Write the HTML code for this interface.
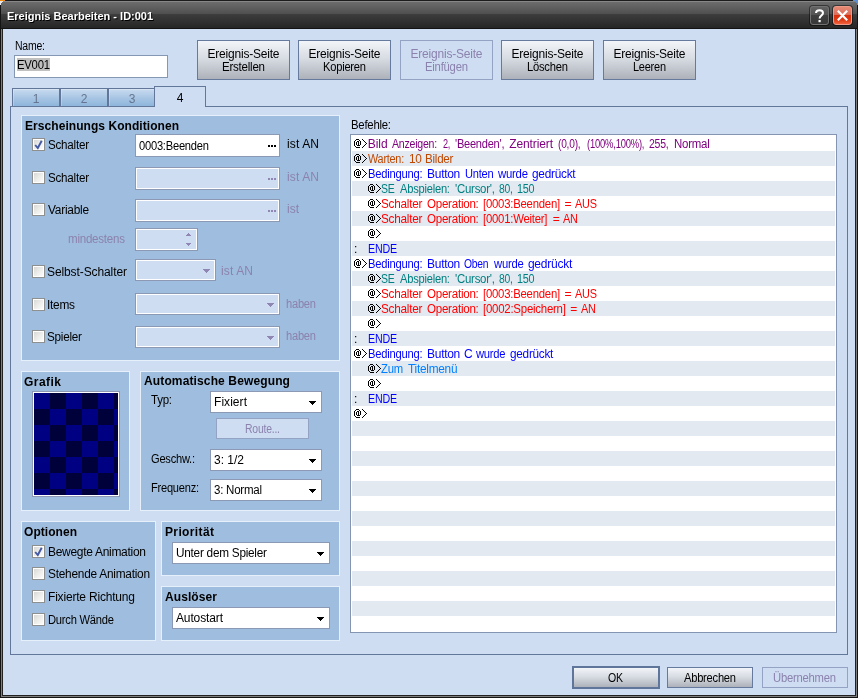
<!DOCTYPE html>
<html><head><meta charset="utf-8"><title>Ereignis Bearbeiten</title>
<style>
*{margin:0;padding:0;box-sizing:border-box}
html,body{width:858px;height:698px;overflow:hidden;background:#1c1c1c}
body{position:relative;font-family:"Liberation Sans",sans-serif;font-size:12px;color:#000;line-height:15px}
.a{position:absolute}
.t{position:absolute;white-space:pre;line-height:15px;height:15px}
#tx{position:absolute;left:0;top:0;width:858px;height:698px;will-change:transform}
.b{font-weight:bold}
.d{color:#8b82ad}
.grp{position:absolute;background:#9fbedf;border:1px solid #e6f0fb}
.in{position:absolute;background:#fff;border:1px solid #8c99b5}
.in.dis{background:#cfddf3;box-shadow:inset 0 0 0 1px #fff}
.cb{position:absolute;width:13px;height:13px;border:1px solid #8e8f8f;background:linear-gradient(135deg,#d4d4d2 0%,#ececea 50%,#ffffff 100%);box-shadow:inset 0 0 0 1px #fff}
.btn{position:absolute;border:1px solid #667a9d;background:linear-gradient(#f2f5f9 0%,#d8dce3 45%,#adb2ba 100%)}
.btn.dis{background:#cfddf3;border-color:#94a3c3}
.arr{position:absolute;width:0;height:0;border-left:3.5px solid transparent;border-right:3.5px solid transparent;border-top:4px solid #000}
.arr.dis{border-top-color:#8f86b3}
.tab{position:absolute;top:88px;height:19px;border:1px solid #617699;background:linear-gradient(#c9dbf0 0%,#a9c6e4 50%,#8db5db 100%);box-shadow:inset 1px 1px 0 rgba(255,255,255,.25)}
.row{position:absolute;left:352px;width:483px;height:15px}
.row.g{background:#e2e9f1}
</style></head>
<body>
<div class="a" style="left:0;top:0;width:858px;height:698px;background:#141414"></div>
<div class="a" style="left:1px;top:1px;width:856px;height:696px;background:#7e7e7e"></div>
<div class="a" style="left:2px;top:2px;width:854px;height:694px;background:#222"></div>
<div class="a" style="left:1px;top:0;width:856px;height:29px;background:linear-gradient(#1c1c1c 0,#1c1c1c 1px,#878787 1px,#878787 2px,#6c6c6c 2px,#505050 13.5px,#3d3d3d 14px,#272727 27.5px,#131313 28px,#131313 29px)"></div>
<div class="a" style="left:810px;top:6px;width:19px;height:19px;border-radius:3px;border:1px solid #727272;box-shadow:0 0 0 1px rgba(0,0,0,.45);background:linear-gradient(#626262 0,#535353 45%,#3e3e3e 50%,#383838 100%)"></div>
<svg class="a" style="left:810px;top:6px" width="19" height="19" viewBox="0 0 19 19"><path d="M6 7 C6 3.2 13 3.2 13 7 C13 9.6 9.6 9.6 9.6 12.6" fill="none" stroke="#fff" stroke-width="2"/><rect x="8.5" y="14" width="2.2" height="2.2" fill="#fff"/></svg>
<div class="a" style="left:833px;top:6px;width:19px;height:19px;border-radius:3px;border:1px solid #ee9a88;box-shadow:0 0 0 1px rgba(0,0,0,.45);background:linear-gradient(#e58a76 0,#dc6f5a 45%,#d8300e 50%,#dc3a16 75%,#f0603c 100%)"></div>
<svg class="a" style="left:833px;top:6px" width="19" height="19" viewBox="0 0 19 19"><path d="M4.8 4.8 L14.2 14.2 M14.2 4.8 L4.8 14.2" fill="none" stroke="#fff" stroke-width="2.2"/></svg>
<div class="a" style="left:0;top:0;width:5px;height:1px;background:#f58a10"></div>
<div class="a" style="left:0;top:1px;width:3px;height:1px;background:#e6e8ea"></div>
<div class="a" style="left:0;top:2px;width:2px;height:1px;background:#e6e8ea"></div>
<div class="a" style="left:0;top:3px;width:1px;height:2px;background:#e6e8ea"></div>
<div class="a" style="left:853px;top:0;width:5px;height:1px;background:#5b8fd6"></div>
<div class="a" style="left:855px;top:1px;width:3px;height:1px;background:#5b8fd6"></div>
<div class="a" style="left:856px;top:2px;width:2px;height:1px;background:#5b8fd6"></div>
<div class="a" style="left:857px;top:3px;width:1px;height:2px;background:#5b8fd6"></div>
<div class="a" style="left:3px;top:29px;width:852px;height:666px;background:#cfddf3"></div>
<div class="in" style="left:14px;top:55px;width:154px;height:23px;border-color:#8497b3"></div>
<div class="a" style="left:17px;top:58px;width:33px;height:13px;background:#c0c0c0"></div>
<div class="btn" style="left:197px;top:40px;width:93px;height:40px"></div>
<div class="btn" style="left:298px;top:40px;width:93px;height:40px"></div>
<div class="btn dis" style="left:400px;top:40px;width:93px;height:40px"></div>
<div class="btn" style="left:501px;top:40px;width:93px;height:40px"></div>
<div class="btn" style="left:603px;top:40px;width:93px;height:40px"></div>
<div class="a" style="left:10px;top:106px;width:838px;height:549px;border:1px solid #63779b;background:#cfddf3"></div>
<div class="tab" style="left:12px;width:48px"></div>
<div class="tab" style="left:60px;width:48px"></div>
<div class="tab" style="left:108px;width:48px"></div>
<div class="a" style="left:154px;top:86px;width:52px;height:21px;border:1px solid #63779b;border-bottom:none;background:#cfddf3"></div>
<div class="grp" style="left:21px;top:115px;width:319px;height:246px"></div>
<div class="cb" style="left:32px;top:138px"></div>
<svg class="a" style="left:32px;top:138px" width="13" height="13" viewBox="0 0 13 13"><path d="M3.2 7 L5.8 10 L9.7 2.8" fill="none" stroke="#4359a5" stroke-width="1.9"/></svg>
<div class="in" style="left:135px;top:134px;width:145px;height:23px"></div>
<div class="a" style="left:268px;top:145px;width:2px;height:2px;background:#000"></div>
<div class="a" style="left:271px;top:145px;width:2px;height:2px;background:#000"></div>
<div class="a" style="left:274px;top:145px;width:2px;height:2px;background:#000"></div>
<div class="cb" style="left:32px;top:171px"></div>
<div class="in dis" style="left:135px;top:167px;width:145px;height:23px"></div>
<div class="a" style="left:268px;top:178px;width:2px;height:2px;background:#8f86b3"></div>
<div class="a" style="left:271px;top:178px;width:2px;height:2px;background:#8f86b3"></div>
<div class="a" style="left:274px;top:178px;width:2px;height:2px;background:#8f86b3"></div>
<div class="cb" style="left:32px;top:203px"></div>
<div class="in dis" style="left:135px;top:199px;width:145px;height:23px"></div>
<div class="a" style="left:268px;top:210px;width:2px;height:2px;background:#8f86b3"></div>
<div class="a" style="left:271px;top:210px;width:2px;height:2px;background:#8f86b3"></div>
<div class="a" style="left:274px;top:210px;width:2px;height:2px;background:#8f86b3"></div>
<div class="in dis" style="left:135px;top:228px;width:63px;height:23px"></div>
<svg class="a" style="left:186px;top:233px" width="5" height="3" viewBox="0 0 5 3" shape-rendering="crispEdges"><path d="M2 0h1v1h-1zM1 1h3v1h-3zM0 2h5v1h-5z" fill="#8f86b3"/></svg>
<svg class="a" style="left:186px;top:243px" width="5" height="3" viewBox="0 0 5 3" shape-rendering="crispEdges"><path d="M0 0h5v1h-5zM1 1h3v1h-3zM2 2h1v1h-1z" fill="#8f86b3"/></svg>
<div class="cb" style="left:32px;top:265px"></div>
<div class="in dis" style="left:135px;top:259px;width:81px;height:22px"></div>
<svg class="a" style="left:203px;top:269px" width="7" height="4" viewBox="0 0 7 4" shape-rendering="crispEdges"><path d="M0 0h7v1h-7zM1 1h5v1h-5zM2 2h3v1h-3zM3 3h1v1h-1z" fill="#8f86b3"/></svg>
<div class="cb" style="left:32px;top:298px"></div>
<div class="in dis" style="left:135px;top:293px;width:145px;height:22px"></div>
<svg class="a" style="left:267px;top:303px" width="7" height="4" viewBox="0 0 7 4" shape-rendering="crispEdges"><path d="M0 0h7v1h-7zM1 1h5v1h-5zM2 2h3v1h-3zM3 3h1v1h-1z" fill="#8f86b3"/></svg>
<div class="cb" style="left:32px;top:330px"></div>
<div class="in dis" style="left:135px;top:326px;width:145px;height:22px"></div>
<svg class="a" style="left:267px;top:336px" width="7" height="4" viewBox="0 0 7 4" shape-rendering="crispEdges"><path d="M0 0h7v1h-7zM1 1h5v1h-5zM2 2h3v1h-3zM3 3h1v1h-1z" fill="#8f86b3"/></svg>
<div class="grp" style="left:21px;top:371px;width:109px;height:140px"></div>
<div class="a" style="left:32px;top:391px;width:88px;height:106px;border:1px solid #8c99b5;background:#fff"></div>
<div class="a" style="left:34px;top:393px;width:84px;height:102px;background-color:#000080;background-image:conic-gradient(#00003a 25%,#000082 0 50%,#00003a 0 75%,#000082 0);background-size:32px 32px;background-position:0 0"></div>
<div class="grp" style="left:140px;top:371px;width:200px;height:140px"></div>
<div class="in" style="left:210px;top:391px;width:112px;height:22px"></div>
<svg class="a" style="left:309px;top:401px" width="7" height="4" viewBox="0 0 7 4" shape-rendering="crispEdges"><path d="M0 0h7v1h-7zM1 1h5v1h-5zM2 2h3v1h-3zM3 3h1v1h-1z" fill="#000"/></svg>
<div class="btn dis" style="left:216px;top:418px;width:93px;height:21px"></div>
<div class="in" style="left:210px;top:449px;width:112px;height:22px"></div>
<svg class="a" style="left:309px;top:459px" width="7" height="4" viewBox="0 0 7 4" shape-rendering="crispEdges"><path d="M0 0h7v1h-7zM1 1h5v1h-5zM2 2h3v1h-3zM3 3h1v1h-1z" fill="#000"/></svg>
<div class="in" style="left:210px;top:479px;width:112px;height:22px"></div>
<svg class="a" style="left:309px;top:489px" width="7" height="4" viewBox="0 0 7 4" shape-rendering="crispEdges"><path d="M0 0h7v1h-7zM1 1h5v1h-5zM2 2h3v1h-3zM3 3h1v1h-1z" fill="#000"/></svg>
<div class="grp" style="left:21px;top:521px;width:135px;height:120px"></div>
<div class="cb" style="left:32px;top:545px"></div>
<svg class="a" style="left:32px;top:545px" width="13" height="13" viewBox="0 0 13 13"><path d="M3.2 7 L5.8 10 L9.7 2.8" fill="none" stroke="#4359a5" stroke-width="1.9"/></svg>
<div class="cb" style="left:32px;top:567px"></div>
<div class="cb" style="left:32px;top:590px"></div>
<div class="cb" style="left:32px;top:613px"></div>
<div class="grp" style="left:161px;top:521px;width:179px;height:55px"></div>
<div class="in" style="left:172px;top:542px;width:158px;height:22px"></div>
<svg class="a" style="left:317px;top:552px" width="7" height="4" viewBox="0 0 7 4" shape-rendering="crispEdges"><path d="M0 0h7v1h-7zM1 1h5v1h-5zM2 2h3v1h-3zM3 3h1v1h-1z" fill="#000"/></svg>
<div class="grp" style="left:161px;top:586px;width:179px;height:55px"></div>
<div class="in" style="left:172px;top:607px;width:158px;height:22px"></div>
<svg class="a" style="left:317px;top:617px" width="7" height="4" viewBox="0 0 7 4" shape-rendering="crispEdges"><path d="M0 0h7v1h-7zM1 1h5v1h-5zM2 2h3v1h-3zM3 3h1v1h-1z" fill="#000"/></svg>
<div class="a" style="left:350px;top:134px;width:487px;height:499px;border:1px solid #8395b0;background:#fff"></div>
<div class="row g" style="top:151px"></div>
<div class="row g" style="top:181px"></div>
<div class="row g" style="top:211px"></div>
<div class="row g" style="top:241px"></div>
<div class="row g" style="top:271px"></div>
<div class="row g" style="top:301px"></div>
<div class="row g" style="top:331px"></div>
<div class="row g" style="top:361px"></div>
<div class="row g" style="top:391px"></div>
<div class="row g" style="top:421px"></div>
<div class="row g" style="top:451px"></div>
<div class="row g" style="top:481px"></div>
<div class="row g" style="top:511px"></div>
<div class="row g" style="top:541px"></div>
<div class="row g" style="top:571px"></div>
<div class="row g" style="top:601px"></div>
<svg width="0" height="0" style="position:absolute"><defs><symbol id="at" viewBox="0 0 16 15"><path d="M4 3h3v1h-3zM3 4h1v1h-1zM7 4h1v1h-1zM2 5h1v1h-1zM5 5h2v1h-2zM8 5h1v1h-1zM2 6h1v1h-1zM4 6h1v1h-1zM6 6h1v1h-1zM8 6h1v1h-1zM2 7h1v1h-1zM4 7h1v1h-1zM6 7h1v1h-1zM8 7h1v1h-1zM2 8h1v1h-1zM4 8h1v1h-1zM6 8h1v1h-1zM8 8h1v1h-1zM2 9h1v1h-1zM5 9h3v1h-3zM3 10h1v1h-1zM4 11h4v1h-4zM10 3h1v1h-1zM11 4h1v1h-1zM12 5h1v1h-1zM13 6h1v1h-1zM14 7h1v1h-1zM13 8h1v1h-1zM12 9h1v1h-1zM11 10h1v1h-1zM10 11h1v1h-1z" fill="#000" shape-rendering="crispEdges"/></symbol></defs></svg>
<svg class="a" style="left:352px;top:136px" width="16" height="15"><use href="#at"/></svg>
<svg class="a" style="left:352px;top:151px" width="16" height="15"><use href="#at"/></svg>
<svg class="a" style="left:352px;top:166px" width="16" height="15"><use href="#at"/></svg>
<svg class="a" style="left:366px;top:181px" width="16" height="15"><use href="#at"/></svg>
<svg class="a" style="left:366px;top:196px" width="16" height="15"><use href="#at"/></svg>
<svg class="a" style="left:366px;top:211px" width="16" height="15"><use href="#at"/></svg>
<svg class="a" style="left:366px;top:226px" width="16" height="15"><use href="#at"/></svg>
<svg class="a" style="left:352px;top:256px" width="16" height="15"><use href="#at"/></svg>
<svg class="a" style="left:366px;top:271px" width="16" height="15"><use href="#at"/></svg>
<svg class="a" style="left:366px;top:286px" width="16" height="15"><use href="#at"/></svg>
<svg class="a" style="left:366px;top:301px" width="16" height="15"><use href="#at"/></svg>
<svg class="a" style="left:366px;top:316px" width="16" height="15"><use href="#at"/></svg>
<svg class="a" style="left:352px;top:346px" width="16" height="15"><use href="#at"/></svg>
<svg class="a" style="left:366px;top:361px" width="16" height="15"><use href="#at"/></svg>
<svg class="a" style="left:366px;top:376px" width="16" height="15"><use href="#at"/></svg>
<svg class="a" style="left:352px;top:406px" width="16" height="15"><use href="#at"/></svg>
<div class="btn" style="left:572px;top:666px;width:88px;height:23px;border:2px solid #5f7599"></div>
<div class="btn" style="left:667px;top:667px;width:86px;height:21px"></div>
<div class="btn dis" style="left:762px;top:667px;width:86px;height:21px"></div>
<div id="tx">
<div class="t b" id="t1" style="left:7px;top:9px;font-size:11px;color:#fff;text-shadow:1px 1px 0 #000;">Ereignis Bearbeiten - ID:001</div>
<div class="t " id="t2" style="left:15px;top:39px;letter-spacing:-0.25px;transform:scaleX(0.874);transform-origin:0 0;">Name:</div>
<div class="t " id="t3" style="left:17px;top:58px;letter-spacing:-0.25px;transform:scaleX(0.942);transform-origin:0 0;">EV001</div>
<div class="t " id="t4" style="left:207.5px;top:47px;letter-spacing:-0.21px;">Ereignis-Seite</div>
<div class="t " id="t5" style="left:222.0px;top:60px;letter-spacing:-0.25px;transform:scaleX(0.962);transform-origin:0 0;">Erstellen</div>
<div class="t " id="t6" style="left:308.5px;top:47px;letter-spacing:-0.21px;">Ereignis-Seite</div>
<div class="t " id="t7" style="left:323.0px;top:60px;letter-spacing:-0.25px;transform:scaleX(0.929);transform-origin:0 0;">Kopieren</div>
<div class="t d" id="t8" style="left:410.5px;top:47px;letter-spacing:-0.21px;">Ereignis-Seite</div>
<div class="t d" id="t9" style="left:425.0px;top:60px;letter-spacing:-0.25px;transform:scaleX(0.942);transform-origin:0 0;">Einfügen</div>
<div class="t " id="t10" style="left:511.5px;top:47px;letter-spacing:-0.21px;">Ereignis-Seite</div>
<div class="t " id="t11" style="left:527.0px;top:60px;letter-spacing:-0.25px;transform:scaleX(0.934);transform-origin:0 0;">Löschen</div>
<div class="t " id="t12" style="left:613.5px;top:47px;letter-spacing:-0.21px;">Ereignis-Seite</div>
<div class="t " id="t13" style="left:633.0px;top:60px;letter-spacing:-0.25px;transform:scaleX(0.913);transform-origin:0 0;">Leeren</div>
<div class="t " id="t14" style="left:32.7px;top:92px;color:#65758f;">1</div>
<div class="t " id="t15" style="left:80.7px;top:92px;color:#65758f;">2</div>
<div class="t " id="t16" style="left:128.7px;top:92px;color:#65758f;">3</div>
<div class="t " id="t17" style="left:176.7px;top:91px;">4</div>
<div class="t b" id="t18" style="left:25px;top:119px;letter-spacing:0.06px;">Erscheinungs Konditionen</div>
<div class="t " id="t19" style="left:48px;top:138px;letter-spacing:-0.25px;transform:scaleX(0.97);transform-origin:0 0;">Schalter</div>
<div class="t " id="t20" style="left:139px;top:139px;letter-spacing:-0.25px;transform:scaleX(0.929);transform-origin:0 0;">0003:Beenden</div>
<div class="t " id="t21" style="left:287px;top:137px;letter-spacing:0.13px;">ist AN</div>
<div class="t " id="t22" style="left:48px;top:171px;letter-spacing:-0.25px;transform:scaleX(0.97);transform-origin:0 0;">Schalter</div>
<div class="t d" id="t23" style="left:287px;top:170px;letter-spacing:0.13px;">ist AN</div>
<div class="t " id="t24" style="left:48px;top:203px;letter-spacing:-0.25px;transform:scaleX(0.991);transform-origin:0 0;">Variable</div>
<div class="t d" id="t25" style="left:287px;top:202px;">ist</div>
<div class="t d" id="t26" style="left:68px;top:232px;letter-spacing:-0.25px;transform:scaleX(0.964);transform-origin:0 0;">mindestens</div>
<div class="t " id="t27" style="left:47px;top:265px;letter-spacing:-0.1px;">Selbst-Schalter</div>
<div class="t d" id="t28" style="left:221px;top:264px;letter-spacing:0.13px;">ist AN</div>
<div class="t " id="t29" style="left:47px;top:298px;letter-spacing:-0.25px;transform:scaleX(0.988);transform-origin:0 0;">Items</div>
<div class="t d" id="t30" style="left:286px;top:297px;letter-spacing:-0.25px;transform:scaleX(0.927);transform-origin:0 0;">haben</div>
<div class="t " id="t31" style="left:47px;top:330px;letter-spacing:-0.25px;transform:scaleX(0.976);transform-origin:0 0;">Spieler</div>
<div class="t d" id="t32" style="left:286px;top:329px;letter-spacing:-0.25px;transform:scaleX(0.927);transform-origin:0 0;">haben</div>
<div class="t b" id="t33" style="left:24px;top:375px;letter-spacing:0.46px;">Grafik</div>
<div class="t b" id="t34" style="left:144px;top:374px;letter-spacing:0.13px;">Automatische Bewegung</div>
<div class="t " id="t35" style="left:151px;top:393px;letter-spacing:-0.25px;transform:scaleX(0.957);transform-origin:0 0;">Typ:</div>
<div class="t " id="t36" style="left:214px;top:395px;letter-spacing:0.05px;">Fixiert</div>
<div class="t d" id="t37" style="left:244.5px;top:422px;letter-spacing:-0.25px;transform:scaleX(0.869);transform-origin:0 0;">Route...</div>
<div class="t " id="t38" style="left:151px;top:452px;letter-spacing:-0.25px;transform:scaleX(0.924);transform-origin:0 0;">Geschw.:</div>
<div class="t " id="t39" style="left:214px;top:453px;letter-spacing:-0.01px;">3: 1/2</div>
<div class="t " id="t40" style="left:151px;top:481px;letter-spacing:-0.25px;transform:scaleX(0.923);transform-origin:0 0;">Frequenz:</div>
<div class="t " id="t41" style="left:214px;top:483px;letter-spacing:-0.25px;transform:scaleX(0.96);transform-origin:0 0;">3: Normal</div>
<div class="t b" id="t42" style="left:24px;top:525px;letter-spacing:0.05px;">Optionen</div>
<div class="t " id="t43" style="left:48px;top:545px;letter-spacing:-0.3px;">Bewegte Animation</div>
<div class="t " id="t44" style="left:48px;top:567px;letter-spacing:-0.25px;transform:scaleX(0.989);transform-origin:0 0;">Stehende Animation</div>
<div class="t " id="t45" style="left:48px;top:590px;letter-spacing:-0.19px;">Fixierte Richtung</div>
<div class="t " id="t46" style="left:48px;top:613px;letter-spacing:-0.25px;transform:scaleX(0.931);transform-origin:0 0;">Durch Wände</div>
<div class="t b" id="t47" style="left:165px;top:525px;letter-spacing:0.37px;">Priorität</div>
<div class="t " id="t48" style="left:176px;top:546px;letter-spacing:-0.25px;transform:scaleX(0.981);transform-origin:0 0;">Unter dem Spieler</div>
<div class="t b" id="t49" style="left:165px;top:590px;letter-spacing:0.09px;">Auslöser</div>
<div class="t " id="t50" style="left:176px;top:611px;letter-spacing:-0.13px;">Autostart</div>
<div class="t " id="t51" style="left:351px;top:118px;letter-spacing:-0.25px;transform:scaleX(0.946);transform-origin:0 0;">Befehle:</div>
<div class="t " id="t52" style="left:367.7px;top:137px;letter-spacing:-0.04px;color:#800080;">Bild</div>
<div class="t " id="t53" style="left:392.0px;top:137px;letter-spacing:-0.25px;transform:scaleX(0.88);transform-origin:0 0;color:#800080;">Anzeigen:</div>
<div class="t " id="t54" style="left:442.9px;top:137px;letter-spacing:-0.25px;transform:scaleX(0.758);transform-origin:0 0;color:#800080;">2,</div>
<div class="t " id="t55" style="left:454.7px;top:137px;letter-spacing:-0.25px;transform:scaleX(0.921);transform-origin:0 0;color:#800080;">'Beenden',</div>
<div class="t " id="t56" style="left:509.3px;top:137px;letter-spacing:-0.12px;color:#800080;">Zentriert</div>
<div class="t " id="t57" style="left:558.2px;top:137px;letter-spacing:-0.25px;transform:scaleX(0.848);transform-origin:0 0;color:#800080;">(0,0),</div>
<div class="t " id="t58" style="left:586.5px;top:137px;letter-spacing:-0.25px;transform:scaleX(0.784);transform-origin:0 0;color:#800080;">(100%,100%),</div>
<div class="t " id="t59" style="left:648.9px;top:137px;letter-spacing:-0.25px;transform:scaleX(0.871);transform-origin:0 0;color:#800080;">255,</div>
<div class="t " id="t60" style="left:674.0px;top:137px;letter-spacing:-0.25px;transform:scaleX(0.954);transform-origin:0 0;color:#800080;">Normal</div>
<div class="t " id="t61" style="left:367.7px;top:152px;letter-spacing:-0.25px;transform:scaleX(0.903);transform-origin:0 0;color:#c04800;">Warten:</div>
<div class="t " id="t62" style="left:409.1px;top:152px;letter-spacing:-0.25px;transform:scaleX(0.984);transform-origin:0 0;color:#c04800;">10</div>
<div class="t " id="t63" style="left:424.9px;top:152px;letter-spacing:-0.25px;transform:scaleX(0.965);transform-origin:0 0;color:#c04800;">Bilder</div>
<div class="t " id="t64" style="left:367.7px;top:167px;letter-spacing:-0.25px;transform:scaleX(0.932);transform-origin:0 0;color:#0000ff;">Bedingung:</div>
<div class="t " id="t65" style="left:427.1px;top:167px;letter-spacing:-0.3px;color:#0000ff;">Button</div>
<div class="t " id="t66" style="left:464.7px;top:167px;letter-spacing:-0.25px;transform:scaleX(0.925);transform-origin:0 0;color:#0000ff;">Unten</div>
<div class="t " id="t67" style="left:498.0px;top:167px;letter-spacing:-0.25px;transform:scaleX(0.947);transform-origin:0 0;color:#0000ff;">wurde</div>
<div class="t " id="t68" style="left:532.4px;top:167px;letter-spacing:-0.25px;transform:scaleX(0.985);transform-origin:0 0;color:#0000ff;">gedrückt</div>
<div class="t " id="t69" style="left:381.3px;top:182px;letter-spacing:-0.25px;transform:scaleX(0.875);transform-origin:0 0;color:#008080;">SE</div>
<div class="t " id="t70" style="left:400.3px;top:182px;letter-spacing:-0.25px;transform:scaleX(0.929);transform-origin:0 0;color:#008080;">Abspielen:</div>
<div class="t " id="t71" style="left:454.7px;top:182px;letter-spacing:-0.25px;transform:scaleX(0.952);transform-origin:0 0;color:#008080;">'Cursor',</div>
<div class="t " id="t72" style="left:499.0px;top:182px;letter-spacing:-0.25px;transform:scaleX(0.865);transform-origin:0 0;color:#008080;">80,</div>
<div class="t " id="t73" style="left:517.4px;top:182px;letter-spacing:-0.25px;transform:scaleX(0.901);transform-origin:0 0;color:#008080;">150</div>
<div class="t " id="t74" style="left:381.3px;top:197px;letter-spacing:-0.25px;transform:scaleX(0.979);transform-origin:0 0;color:#ff0000;">Schalter</div>
<div class="t " id="t75" style="left:427.1px;top:197px;letter-spacing:-0.25px;transform:scaleX(0.963);transform-origin:0 0;color:#ff0000;">Operation:</div>
<div class="t " id="t76" style="left:483.3px;top:197px;letter-spacing:-0.25px;transform:scaleX(0.947);transform-origin:0 0;color:#ff0000;">[0003:Beenden]</div>
<div class="t " id="t77" style="left:564.6px;top:197px;color:#ff0000;">=</div>
<div class="t " id="t78" style="left:575.4px;top:197px;letter-spacing:-0.25px;transform:scaleX(0.905);transform-origin:0 0;color:#ff0000;">AUS</div>
<div class="t " id="t79" style="left:381.3px;top:212px;letter-spacing:-0.25px;transform:scaleX(0.979);transform-origin:0 0;color:#ff0000;">Schalter</div>
<div class="t " id="t80" style="left:427.1px;top:212px;letter-spacing:-0.25px;transform:scaleX(0.963);transform-origin:0 0;color:#ff0000;">Operation:</div>
<div class="t " id="t81" style="left:483.3px;top:212px;letter-spacing:-0.25px;transform:scaleX(0.946);transform-origin:0 0;color:#ff0000;">[0001:Weiter]</div>
<div class="t " id="t82" style="left:552.7px;top:212px;color:#ff0000;">=</div>
<div class="t " id="t83" style="left:563.4px;top:212px;letter-spacing:-0.25px;transform:scaleX(0.913);transform-origin:0 0;color:#ff0000;">AN</div>
<div class="t " id="t84" style="left:354px;top:242px;">:</div>
<div class="t " id="t85" style="left:368px;top:242px;letter-spacing:-0.25px;transform:scaleX(0.89);transform-origin:0 0;color:#0000ff;">ENDE</div>
<div class="t " id="t86" style="left:367.7px;top:257px;letter-spacing:-0.25px;transform:scaleX(0.932);transform-origin:0 0;color:#0000ff;">Bedingung:</div>
<div class="t " id="t87" style="left:427.1px;top:257px;letter-spacing:-0.3px;color:#0000ff;">Button</div>
<div class="t " id="t88" style="left:464.4px;top:257px;letter-spacing:-0.25px;transform:scaleX(0.86);transform-origin:0 0;color:#0000ff;">Oben</div>
<div class="t " id="t89" style="left:493.8px;top:257px;letter-spacing:-0.25px;transform:scaleX(0.937);transform-origin:0 0;color:#0000ff;">wurde</div>
<div class="t " id="t90" style="left:527.9px;top:257px;letter-spacing:-0.22px;color:#0000ff;">gedrückt</div>
<div class="t " id="t91" style="left:381.3px;top:272px;letter-spacing:-0.25px;transform:scaleX(0.875);transform-origin:0 0;color:#008080;">SE</div>
<div class="t " id="t92" style="left:400.3px;top:272px;letter-spacing:-0.25px;transform:scaleX(0.929);transform-origin:0 0;color:#008080;">Abspielen:</div>
<div class="t " id="t93" style="left:454.7px;top:272px;letter-spacing:-0.25px;transform:scaleX(0.952);transform-origin:0 0;color:#008080;">'Cursor',</div>
<div class="t " id="t94" style="left:499.0px;top:272px;letter-spacing:-0.25px;transform:scaleX(0.865);transform-origin:0 0;color:#008080;">80,</div>
<div class="t " id="t95" style="left:517.4px;top:272px;letter-spacing:-0.25px;transform:scaleX(0.901);transform-origin:0 0;color:#008080;">150</div>
<div class="t " id="t96" style="left:381.3px;top:287px;letter-spacing:-0.25px;transform:scaleX(0.979);transform-origin:0 0;color:#ff0000;">Schalter</div>
<div class="t " id="t97" style="left:427.1px;top:287px;letter-spacing:-0.25px;transform:scaleX(0.963);transform-origin:0 0;color:#ff0000;">Operation:</div>
<div class="t " id="t98" style="left:483.3px;top:287px;letter-spacing:-0.25px;transform:scaleX(0.947);transform-origin:0 0;color:#ff0000;">[0003:Beenden]</div>
<div class="t " id="t99" style="left:564.6px;top:287px;color:#ff0000;">=</div>
<div class="t " id="t100" style="left:575.4px;top:287px;letter-spacing:-0.25px;transform:scaleX(0.905);transform-origin:0 0;color:#ff0000;">AUS</div>
<div class="t " id="t101" style="left:381.3px;top:302px;letter-spacing:-0.25px;transform:scaleX(0.979);transform-origin:0 0;color:#ff0000;">Schalter</div>
<div class="t " id="t102" style="left:427.1px;top:302px;letter-spacing:-0.25px;transform:scaleX(0.963);transform-origin:0 0;color:#ff0000;">Operation:</div>
<div class="t " id="t103" style="left:483.3px;top:302px;letter-spacing:-0.25px;transform:scaleX(0.953);transform-origin:0 0;color:#ff0000;">[0002:Speichern]</div>
<div class="t " id="t104" style="left:570.3px;top:302px;color:#ff0000;">=</div>
<div class="t " id="t105" style="left:581.3px;top:302px;letter-spacing:-0.25px;transform:scaleX(0.907);transform-origin:0 0;color:#ff0000;">AN</div>
<div class="t " id="t106" style="left:354px;top:332px;">:</div>
<div class="t " id="t107" style="left:368px;top:332px;letter-spacing:-0.25px;transform:scaleX(0.89);transform-origin:0 0;color:#0000ff;">ENDE</div>
<div class="t " id="t108" style="left:367.7px;top:347px;letter-spacing:-0.25px;transform:scaleX(0.932);transform-origin:0 0;color:#0000ff;">Bedingung:</div>
<div class="t " id="t109" style="left:427.1px;top:347px;letter-spacing:-0.3px;color:#0000ff;">Button</div>
<div class="t " id="t110" style="left:464.0px;top:347px;color:#0000ff;">C</div>
<div class="t " id="t111" style="left:476.4px;top:347px;letter-spacing:-0.25px;transform:scaleX(0.934);transform-origin:0 0;color:#0000ff;">wurde</div>
<div class="t " id="t112" style="left:510.4px;top:347px;letter-spacing:-0.25px;transform:scaleX(0.98);transform-origin:0 0;color:#0000ff;">gedrückt</div>
<div class="t " id="t113" style="left:381.3px;top:362px;letter-spacing:-0.25px;transform:scaleX(0.94);transform-origin:0 0;color:#0080ff;">Zum</div>
<div class="t " id="t114" style="left:407.8px;top:362px;letter-spacing:-0.25px;transform:scaleX(0.985);transform-origin:0 0;color:#0080ff;">Titelmenü</div>
<div class="t " id="t115" style="left:354px;top:392px;">:</div>
<div class="t " id="t116" style="left:368px;top:392px;letter-spacing:-0.25px;transform:scaleX(0.89);transform-origin:0 0;color:#0000ff;">ENDE</div>
<div class="t " id="t117" style="left:607.5px;top:671px;letter-spacing:-0.25px;transform:scaleX(0.878);transform-origin:0 0;">OK</div>
<div class="t " id="t118" style="left:684.0px;top:671px;letter-spacing:-0.25px;transform:scaleX(0.928);transform-origin:0 0;">Abbrechen</div>
<div class="t d" id="t119" style="left:772.7px;top:671px;letter-spacing:-0.25px;transform:scaleX(0.939);transform-origin:0 0;">Übernehmen</div>
</div>
</body></html>
